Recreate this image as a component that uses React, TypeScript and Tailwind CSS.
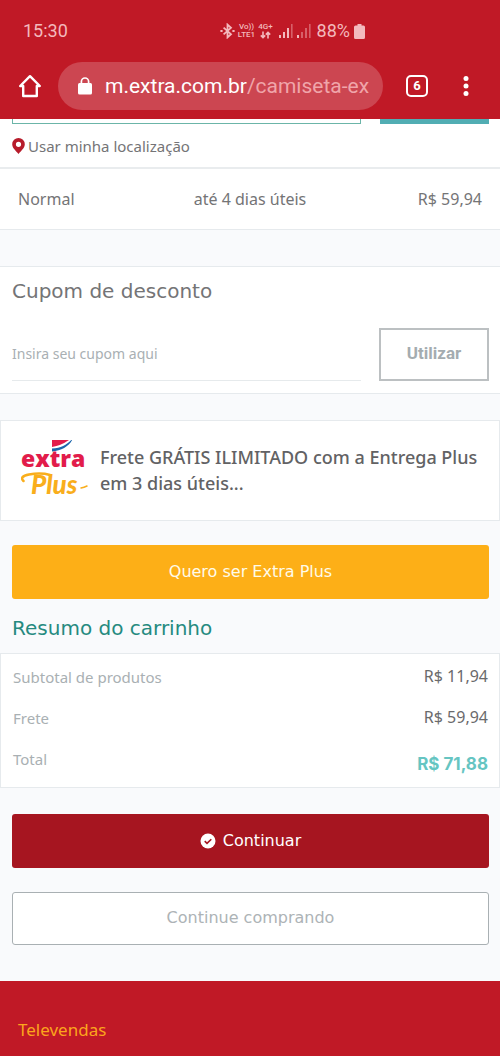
import React from "react";

const body = "font-['Noto_Sans','Open_Sans',sans-serif]";
const display = "font-['DejaVu_Sans','Noto_Sans',sans-serif]";

function BluetoothIcon() {
  return (
    <svg viewBox="0 0 15 16" className="h-4 w-[15px]" fill="none" stroke="currentColor" strokeWidth="1.8" aria-hidden="true">
      <path d="M3.6 4.6 11 11.2 7.5 14.4V1.6L11 4.8 3.6 11.4" />
      <path d="M.4 8h2.200M12.400 8h2.200" strokeWidth="2" />
    </svg>
  );
}

function SignalIcon({ faint = false }: { faint?: boolean }) {
  return (
    <svg viewBox="0 0 14 14" className="h-3.5 w-3.5" fill="currentColor" aria-hidden="true">
      <rect x="0" y="11" width="2" height="3" />
      <rect x="4" y="8" width="2" height="6" opacity={faint ? 0.45 : 1} />
      <rect x="8" y="4" width="2" height="10" opacity={faint ? 0.45 : 1} />
      <rect x="12" y="0" width="1.6" height="14" opacity="0.45" />
    </svg>
  );
}

function StatusBar() {
  return (
    <div className="flex h-[62px] items-center pl-[23px] pr-[135px] text-[#f3b9bd]">
      <time className="text-[18px] leading-6">15:30</time>
      <div className="ml-auto flex items-center">
        <BluetoothIcon />
        <div className="ml-[3px] flex flex-col items-center text-[8px] font-medium leading-[8px]">
          <span>Vo))</span>
          <span>LTE1</span>
        </div>
        <div className="ml-[3px] flex flex-col items-center text-[8px] font-medium leading-[8px]">
          <span>4G+</span>
          <svg viewBox="0 0 11 8" className="h-2 w-[11px]" fill="none" stroke="currentColor" strokeWidth="1.6" aria-hidden="true">
            <path d="M3 .5v6M.8 4.4 3 6.7l2.2-2.3M8 7.500v-6M5.8 3.6 8 1.3l2.2 2.3" />
          </svg>
        </div>
        <div className="ml-1.5 flex gap-1">
          <SignalIcon />
          <SignalIcon faint />
        </div>
        <span className="ml-1.5 text-[18px] leading-6">88%</span>
        <svg viewBox="0 0 11 15" className="ml-1 h-[15px] w-[11px]" fill="currentColor" aria-hidden="true">
          <path d="M3.500 0h4v1.500H9.500Q11 1.500 11 3V13.500Q11 15 9.500 15h-8Q0 15 0 13.500V3Q0 1.500 1.500 1.500H3.500Z" />
        </svg>
      </div>
    </div>
  );
}

function BrowserBar() {
  return (
    <div className="flex items-center pb-[9px] pl-[18px] pr-7 text-white">
      <button type="button" aria-label="Página inicial" className="shrink-0">
        <svg viewBox="0 0 24 24" className="h-6 w-6" fill="none" stroke="currentColor" strokeWidth="2.4" strokeLinejoin="round" strokeLinecap="round" aria-hidden="true">
          <path d="M2.200 12 12 2.200l9.800 9.800h-3v10H5.200V12Z" />
        </svg>
      </button>
      <a href="#endereco" className="ml-4 flex h-12 min-w-0 flex-1 items-center rounded-full bg-[#cc4651] pl-5 pr-2">
        <svg viewBox="0 0 14 18" className="h-[18px] w-3.5 shrink-0" aria-hidden="true">
          <rect x="0" y="6" width="14" height="11.500" rx="1.500" fill="currentColor" />
          <path d="M3.400 7V4.600a3.600 3.600 0 0 1 7.200 0V7" fill="none" stroke="currentColor" strokeWidth="1.700" />
        </svg>
        <span className="ml-[13px] overflow-hidden whitespace-nowrap text-[21px] leading-7">
          m.extra.com.br<span className="text-[#f0a5aa]">/camiseta-ex</span>
        </span>
      </a>
      <button type="button" aria-label="6 guias abertas" className="ml-[23px] flex h-[22px] w-[22px] shrink-0 items-center justify-center rounded-[5px] border-2 border-white text-[13px] font-bold leading-4">
        6
      </button>
      <button type="button" aria-label="Mais opções" className="ml-8 shrink-0">
        <svg viewBox="0 0 12 22" className="h-[22px] w-3" fill="currentColor" aria-hidden="true">
          <circle cx="6" cy="3.500" r="2.500" />
          <circle cx="6" cy="11" r="2.500" />
          <circle cx="6" cy="18.500" r="2.500" />
        </svg>
      </button>
    </div>
  );
}

function ExtraPlusLogo() {
  return (
    <svg viewBox="0 0 68 60" className="h-[60px] w-[68px] shrink-0" role="img" aria-label="Extra Plus">
      <path d="M31 -1.500H50Q41 5.500 31 7Z" fill="#e21c4b" />
      <path d="M52 -2C47 4 41 8 31 8.500V11.500C41 10.500 49 6 52 -2Z" fill="#1c66ac" />
      <text x="0" y="27" fill="#e21c4b" fontFamily="Open Sans, sans-serif" fontWeight="800" fontSize="23">extra</text>
      <path d="M2.500 41Q-2 36.500 8 34.500Q20 32.500 29 35" fill="none" stroke="#f9ae1c" strokeWidth="2.500" strokeLinecap="round" />
      <text x="10" y="54" fill="#f9ae1c" fontFamily="Lato, sans-serif" fontWeight="900" fontStyle="italic" fontSize="26">Plus</text>
      <path d="M60 48Q63 47.500 66 46" fill="none" stroke="#f9ae1c" strokeWidth="1.500" strokeLinecap="round" />
    </svg>
  );
}

function PostcodeSection() {
  return (
    <section className="bg-white">
      <div className="flex gap-[19px] pl-3 pr-[11px]">
        <div className="h-[5px] flex-1 border border-t-0 border-[#6bb5a8]" />
        <div className="h-[5px] w-[109px] bg-[#51adb3]" />
      </div>
      <div className="flex h-[45px] items-center border-b-2 border-[#e9ecee] pl-3">
        <a href="#localizacao" className="flex items-center gap-[3px] text-[15px] leading-5 text-[#747476]">
          <svg viewBox="0 0 13 16" className="h-4 w-[13px]" aria-hidden="true">
            <path fillRule="evenodd" fill="#b71c2b" d="M6.500 0A6.300 6.300 0 0 0 .2 6.300C.2 10 4 13 6.500 16 9 13 12.800 10 12.800 6.300A6.300 6.300 0 0 0 6.500 0Zm0 3.700a2.600 2.600 0 1 1 0 5.200 2.600 2.600 0 0 1 0-5.200Z" />
          </svg>
          Usar minha localização
        </a>
      </div>
      <table className="w-full border-b border-[#e6eaed] text-[16px] leading-6 text-[#747476]">
        <tbody>
          <tr className="h-[60px]">
            <td className="w-1/4 pl-[18px]">Normal</td>
            <td className="w-1/2 text-center">até 4 dias úteis</td>
            <td className="w-1/4 pr-[18px] text-right">R$ 59,94</td>
          </tr>
        </tbody>
      </table>
    </section>
  );
}

function CouponSection() {
  return (
    <section className="mt-9 border-y border-[#e6eaed] bg-white pb-3 pl-3 pr-[11px] pt-3">
      <h2 className={`${display} text-[20px] leading-6 text-[#747476]`}>Cupom de desconto</h2>
      <form className="mt-[25px] flex gap-[18px]" onSubmit={(e) => e.preventDefault()}>
        <input
          type="text"
          aria-label="Cupom de desconto"
          placeholder="Insira seu cupom aqui"
          className="h-[53px] min-w-0 flex-1 border-b border-[#e6eaec] bg-transparent text-[14px] text-[#747476] outline-none placeholder:text-[#a9b0b3]"
        />
        <button type="submit" className="h-[53px] w-[110px] border-2 border-[#bcc0c2] font-['Roboto',sans-serif] text-[17px] font-bold text-[#a4acb0]">
          Utilizar
        </button>
      </form>
    </section>
  );
}

const totals = [
  { label: "Subtotal de produtos", value: "R$ 11,94" },
  { label: "Frete", value: "R$ 59,94" },
];

function Summary() {
  return (
    <section>
      <h2 className={`${display} mt-[17px] pl-3 text-[20px] leading-6 text-[#268a80]`}>Resumo do carrinho</h2>
      <div className="mt-[13px] border border-[#e6eaed] bg-white pb-2 pl-3 pr-[11px] pt-0.5">
        <table className="w-full text-[16px] leading-6">
          <tbody>
            {totals.map((t) => (
              <tr key={t.label} className="h-[41px]">
                <th scope="row" className="pt-0.5 text-left text-[15px] font-normal text-[#a9b0b3]">{t.label}</th>
                <td className="text-right align-middle text-[#6a6a6c]">{t.value}</td>
              </tr>
            ))}
            <tr className="h-[41px]">
              <th scope="row" className="pt-0.5 text-left text-[15px] font-normal text-[#a9b0b3]">Total</th>
              <td className="pt-3 text-right font-['Inter',sans-serif] text-[17px] font-bold text-[#66c5c2]">R$ 71,88</td>
            </tr>
          </tbody>
        </table>
      </div>
    </section>
  );
}

export default function App() {
  return (
    <div className={`${body} flex min-h-screen flex-col bg-[#f9fafc]`}>
      <header className="bg-[#c01926] font-['Roboto',sans-serif]">
        <StatusBar />
        <BrowserBar />
      </header>
      <main>
        <PostcodeSection />
        <CouponSection />
        <section className="mt-[26px] flex min-h-[101px] items-center gap-[11px] border border-[#e6eaed] bg-white pl-5 pr-3">
          <ExtraPlusLogo />
          <p className="text-[18px] font-medium leading-[26px] text-[#626264]">
            Frete GRÁTIS ILIMITADO com a Entrega Plus em 3 dias úteis...
          </p>
        </section>
        <div className="mt-6 pl-3 pr-[11px]">
          <button type="button" className={`${display} h-[54px] w-full rounded-[3px] bg-[#fdaf17] text-[16px] text-[#fffbe9]`}>
            Quero ser Extra Plus
          </button>
        </div>
        <Summary />
        <div className="mt-[26px] flex flex-col gap-6 pb-9 pl-3 pr-[11px]">
          <button type="button" className={`${display} flex h-[54px] w-full items-center justify-center gap-[7px] rounded-[3px] bg-[#a61520] text-[16px] text-white`}>
            <svg viewBox="0 0 16 16" className="h-4 w-4" aria-hidden="true">
              <circle cx="8" cy="8" r="7.500" fill="#fff" />
              <path d="m4.700 8.200 2.300 2.200 4.300-4.200" fill="none" stroke="#a61520" strokeWidth="1.600" />
            </svg>
            Continuar
          </button>
          <button type="button" className={`${display} h-[53px] w-full rounded-[3px] border border-[#a9b0b3] bg-white text-[16px] text-[#adb3b6]`}>
            Continue comprando
          </button>
        </div>
      </main>
      <footer className="flex-1 bg-[#c01926] pb-3 pl-[18px] pt-9">
        <a href="#televendas" className="block text-[17px] leading-[26px] text-[#fba51d]">Televendas</a>
      </footer>
    </div>
  );
}
